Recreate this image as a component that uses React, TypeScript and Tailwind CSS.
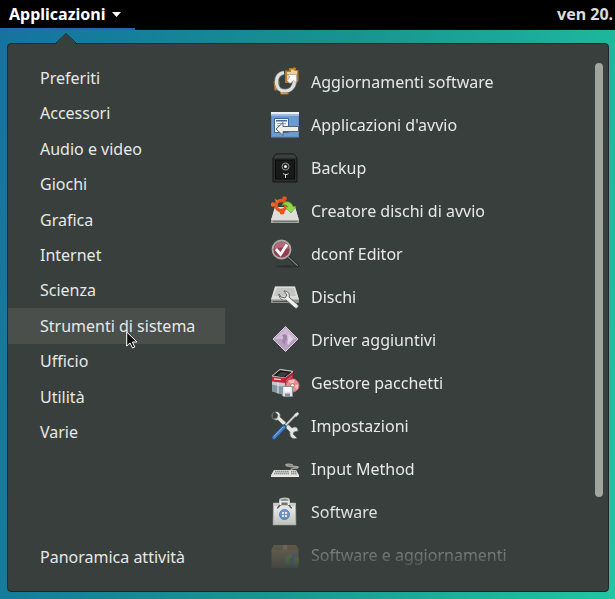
import React from 'react';
import clsx from 'clsx';

interface AppEntry {
  name: string;
  icon: React.ReactNode;
}

const categories = [
  'Preferiti',
  'Accessori',
  'Audio e video',
  'Giochi',
  'Grafica',
  'Internet',
  'Scienza',
  'Strumenti di sistema',
  'Ufficio',
  'Utilità',
  'Varie',
];

const apps: AppEntry[] = [
  {
    name: 'Aggiornamenti software',
    icon: (
      <>
        <path d="M14 2.500h4V0h4l1-1 2 1v2h2.500v11l-2 2H14Z" fill="#b9782a" />
        <path d="M16 4h4V1.500h2.500L24 3h2v10H16Z" fill="#f0cf96" />
        <path d="M2.500 13h6v9.500h-5Z" fill="#b9782a" />
        <path d="M4 14.500h3v6H4Z" fill="#e9bb74" />
        <path d="M8.500 21h9v5.500h-8Z" fill="#b9782a" />
        <path d="M10 24h6v1.500h-6Z" fill="#eabf7c" />
        <path d="M13 4.500C8 5.500 5.500 9 5.500 14c0 6 4 9 8.500 9 5.500 0 9.500-4 9.500-10" fill="none" stroke="#73746f" strokeWidth="4.500" />
        <path d="M13 4.500C8 5.500 5.500 9 5.500 14c0 6 4 9 8.500 9 5.500 0 9.500-4 9.500-10" fill="none" stroke="#dfe0de" strokeWidth="3.200" />
        <path d="M16 6.500h9.500v8.500l-3-2.500-3.500 3-3-3 3-3.500Z" fill="#fafaf9" stroke="#8d8d88" strokeWidth=".6" />
      </>
    ),
  },
  {
    name: "Applicazioni d'avvio",
    icon: (
      <>
        <rect x="0.500" y="1.500" width="27" height="24.500" fill="#6c9bd0" stroke="#5d89bd" />
        <path d="M0 1h28v2H0Z" fill="#edf1f5" />
        <path d="M0 3h28v2H0Z" fill="#9dbde2" />
        <path d="M3.500 7.500h14v14h-14Z" fill="#f1f3f4" stroke="#41648f" />
        <path d="M5 9h11v1.500H5Z" fill="#3f69a3" />
        <path d="M6 12.500h9M6 14.500h5" stroke="#9cadbc" />
        <path d="M5 18 12 11.500v4h15.500v5H12v4Z" fill="#eeeeec" stroke="#59636c" />
      </>
    ),
  },
  {
    name: 'Backup',
    icon: (
      <>
        <path d="M5 0h18l3 4v24H2V4Z" fill="#2c2e2d" stroke="#131514" />
        <path d="M5 0.500h18l2.500 3.500h-23Z" fill="#3c3f3d" />
        <rect x="4.500" y="6" width="19" height="19" fill="#181a19" stroke="#0a0b0a" />
        <circle cx="14.500" cy="12.500" r="3.500" fill="#222" stroke="#969894" />
        <circle cx="14.500" cy="12.500" r="1.500" fill="#f0f0ee" />
        <path d="M12 19.500c2 1.500 4 1.500 5.500 0M14.500 20v4" stroke="#d6d7d4" fill="none" />
      </>
    ),
  },
  {
    name: 'Creatore dischi di avvio',
    icon: (
      <>
        <path d="M4 10h20l4 13v3H0v-3Z" fill="#a3a49f" />
        <path d="M4 10h20l4 13H0Z" fill="#dededb" />
        <path d="M2 24.500h24" stroke="#73746f" />
        <circle cx="10" cy="8.500" r="5" fill="none" stroke="#e9531d" strokeWidth="3.500" />
        <circle cx="2" cy="7.500" r="2.200" fill="#f1672b" />
        <circle cx="13.500" cy="1.500" r="2.300" fill="#e9531d" />
        <circle cx="11" cy="15" r="2.500" fill="#e9531d" />
        <path d="M4 2.500 7 5" stroke="#f27b40" strokeWidth="1.500" />
        <path d="M11 8.500c2-5 9-5 11 1h3l-5 6.500-6-6h3c-1-2-3-3-6-1.500Z" fill="#93d848" stroke="#5aa12f" strokeWidth=".7" />
      </>
    ),
  },
  {
    name: 'dconf Editor',
    icon: (
      <>
        <ellipse cx="15" cy="26.500" rx="11" ry="1.200" fill="#2b2f2d" />
        <path d="m17 17 10.500 9.500" stroke="#191b1a" strokeWidth="2.500" />
        <path d="m17 17 10 9" stroke="#858783" strokeWidth="1.200" />
        <circle cx="10.500" cy="9.500" r="9" fill="#943c4d" stroke="#a9aba7" strokeWidth="1.800" />
        <path d="M3 9a7.500 7.500 0 0 1 15 0C13 7 8 7 3 9" fill="#b06a78" />
        <path d="m5 9 4.500 5.500 6.500-10" fill="none" stroke="#fff" strokeWidth="2.800" />
      </>
    ),
  },
  {
    name: 'Dischi',
    icon: (
      <>
        <path d="M4 3.500h20l4 13.500v3H0v-3Z" fill="#8f918d" />
        <path d="M4 3.500h20l4 13H0Z" fill="#dcdddb" />
        <path d="M6 5h17l2 8H3Z" fill="#c3c5c2" />
        <path d="M2 18.500h18" stroke="#555" />
        <path d="M8 11c0 5 4 7 7 6l9 8c2 1 4-1 3-3l-9-8c1-3-1-6-5-6l3 4-2 3-4-1Z" fill="#efefed" stroke="#5d605c" />
      </>
    ),
  },
  {
    name: 'Driver aggiuntivi',
    icon: (
      <>
        <path d="M14.500 0.500 27 13 14.500 25.500 2 13Z" fill="#b9a0c1" stroke="#dacbdd" />
        <path d="M14.500 2 25 13H4Z" fill="#cebbd3" />
        <path d="M11 9c4-2 6 1 5 4s-4 4 0 8l-4-4c-2-3 2-4-1-8Z" fill="#a085a8" />
        <path d="m17 8 5 5-5 6c-2-4 2-6 0-11Z" fill="#e2d4e3" />
      </>
    ),
  },
  {
    name: 'Gestore pacchetti',
    icon: (
      <>
        <path d="M1 7 9 0l13 2v15l-9 9-12-4Z" fill="#c3c8cb" />
        <path d="M1 7 9 .5 22 2.500 14 9Z" fill="#1d1d1d" stroke="#c9c9c5" />
        <path d="M6 6.500 10 3l7 1-4 4Z" fill="#3b3d3c" />
        <path d="M1 7.500 14 9v5L1 12.500Z" fill="#c32637" />
        <path d="m14 9 8-6v9l-8 6Z" fill="#a8283a" />
        <path d="m15 12 6-5M15 15l6-5" stroke="#d9868e" strokeWidth=".8" />
        <path d="M3 9.800 10 10.700" stroke="#f5e7e6" strokeWidth="1.200" />
        <path d="M1 15.500 13 18v8L1 22.500Z" fill="#8596a3" />
        <path d="M7 13.500v11" stroke="#e7eaec" />
        <circle cx="21.500" cy="16.500" r="6.500" fill="#e78c8e" stroke="#c96b74" />
        <path d="M21.500 16.500 17 11.500l7-1ZM21.500 16.500l6-1-1 5Z" fill="#f5c2b6" />
        <circle cx="21.500" cy="16.500" r="2" fill="#f3eeee" stroke="#b96b72" />
        <path d="M11.500 17.500h10v10h-9l-1-1Z" fill="#dfe4e8" stroke="#8b959d" />
        <path d="M13.500 18h6v4.500h-6Z" fill="#fff" />
        <path d="M14 24.500h5V27h-5Z" fill="#7d8f9d" />
      </>
    ),
  },
  {
    name: 'Impostazioni',
    icon: (
      <>
        <path d="M3 0c-4 4-1 9 4 8l12 12c-1 5 3 8 7 6l-4-4 1-2 4-1c0-4-3-5-6-3L9 5c1-4-2-6-5-5l3 3-1 3-4 1C0 4 1 1 3 0Z" fill="#e4e6e2" stroke="#676b67" strokeWidth=".7" />
        <path d="M26 1.500 13 15" stroke="#555a57" strokeWidth="3" />
        <path d="M26 1.500 13 15" stroke="#d9dcda" strokeWidth="1.800" />
        <path d="M26.500 0 28 2l-3 3-2-2Z" fill="#e5e6e4" />
        <path d="M13 15 3 25.500" stroke="#254f85" strokeWidth="5" strokeLinecap="round" />
        <path d="M13 15 3 25.500" stroke="#4b82c4" strokeWidth="3" strokeLinecap="round" />
        <path d="M12 15 3 24.500" stroke="#91b6df" strokeWidth="1" />
      </>
    ),
  },
  {
    name: 'Input Method',
    icon: (
      <>
        <path d="M20 15c0-3 8-1 7-3-1-1-6 0-10-1-5-1 0-3 5-1" fill="none" stroke="#a9aca8" strokeWidth="1.300" />
        <path d="M3 15h22l3 5v2H0v-2Z" fill="#dededb" />
        <path d="M4 16.500h14M3 18.500h15M20 16.500h5M20 18.500h6" stroke="#8b8e8a" strokeWidth="1.400" strokeDasharray="1.500 .5" />
        <path d="M0 21.300h28" stroke="#f1f1ef" />
      </>
    ),
  },
  {
    name: 'Software',
    icon: (
      <>
        <path d="M9 6V2c0-2 9-2 9 0v4" fill="none" stroke="#bfc2be" strokeWidth="1.800" />
        <path d="M2.500 5h22l.5 22H2Z" fill="#e3e5e2" stroke="#b0b3af" strokeWidth=".6" />
        <path d="M2.500 5h22v3h-22Z" fill="#c9ccc8" />
        <path d="M6 10c2 0 2-4 5-4h5c3 0 3 4 5 4" fill="none" stroke="#555b57" strokeWidth="1.600" />
        <path d="M9.500 7V3.500h8V7" fill="none" stroke="#edeeec" strokeWidth="1.800" />
        <circle cx="13.500" cy="16.500" r="5" fill="#6f99d0" stroke="#5c89c2" />
        <path d="M11 14h2v2h-2ZM14 14h2v2h-2ZM11 17h2v2h-2ZM14 17h2v2h-2Z" fill="#eef3fa" />
      </>
    ),
  },
  {
    name: 'Software e aggiornamenti',
    icon: (
      <>
        <path d="M3 4h22l2.500 5v18h-27V9Z" fill="#9a8767" />
        <path d="M3 4h22l2.500 5H.5Z" fill="#8a7656" />
        <path d="M12 4h4l.5 5h-5Z" fill="#a8977a" />
        <circle cx="20.500" cy="20" r="7.500" fill="#5f8ac4" />
        <path d="m14 17 5-4 3 2-3 3 1 4-3 3-3-4ZM23 17l4-2 1 6-4 5-2-4Z" fill="#8fb955" />
      </>
    ),
  },
];

function TopBar() {
  return (
    <header className="flex h-[30px] items-stretch justify-between bg-black font-bold whitespace-nowrap">
      <button className="flex w-[135px] items-center gap-1.5 border-b-2 border-[#2566ae] pl-[9px] text-white">
        Applicazioni
        <svg viewBox="0 0 9 5" className="h-[5px] w-[9px]" fill="currentColor">
          <path d="M0 0h9L4.500 5Z" />
        </svg>
      </button>
      <button className="w-[58px] shrink-0 pb-0.5 text-left text-[#dcdcdc]">ven 20.</button>
    </header>
  );
}

function CategoryList() {
  return (
    <nav className="flex w-[217px] shrink-0 flex-col justify-between">
      <div className="grid h-[390px] auto-rows-fr">
        {categories.map(name => (
          <button
            key={name}
            className={clsx('pl-8 text-left', name === 'Strumenti di sistema' && 'bg-[#4a4f4c]')}
          >
            {name}
          </button>
        ))}
      </div>
      <button className="h-[38px] pl-8 text-left">Panoramica attività</button>
    </nav>
  );
}

function AppList() {
  return (
    <ul className="ml-[46px] flex-1 mask-b-from-[450px] mask-b-to-[516px]">
      {apps.map(app => (
        <li key={app.name}>
          <button className="flex h-[43px] w-full items-center gap-3 text-left">
            <svg viewBox="0 0 28 28" className="size-7 shrink-0 overflow-visible">
              {app.icon}
            </svg>
            {app.name}
          </button>
        </li>
      ))}
    </ul>
  );
}

export default function App() {
  return (
    <div className="relative flex min-h-screen flex-col bg-linear-100 from-[#1672a0] via-[#18948f] to-[#20c5a2] font-['Noto_Sans',sans-serif] text-base text-[#e6e9e7]">
      <TopBar />
      <main className="relative mt-[13px] mr-[6px] mb-[7px] ml-[7px] flex flex-1 rounded-sm border border-[#202624] bg-[#393f3c] pt-4 pb-[15px]">
        <svg viewBox="0 0 24 12" className="absolute -top-[11px] left-[46px] h-3 w-6">
          <path d="M1 12 12 1 23 12Z" fill="#393f3c" />
          <path d="M0 11h1L12 0.500 23 11h1" fill="none" stroke="#202624" />
        </svg>
        <CategoryList />
        <AppList />
        <div className="mt-[3px] mr-[5px] h-[434px] w-2 rounded-full bg-[#a0a5a2]" />
      </main>
      {/* mouse pointer */}
      <svg viewBox="0 0 12 18" className="pointer-events-none absolute top-[331px] left-[126px] h-[18px] w-3">
        <path d="M.7 1v14l3.300-3 2.500 5 2.300-1-2.400-5H11Z" fill="#111" stroke="#fff" />
      </svg>
    </div>
  );
}
